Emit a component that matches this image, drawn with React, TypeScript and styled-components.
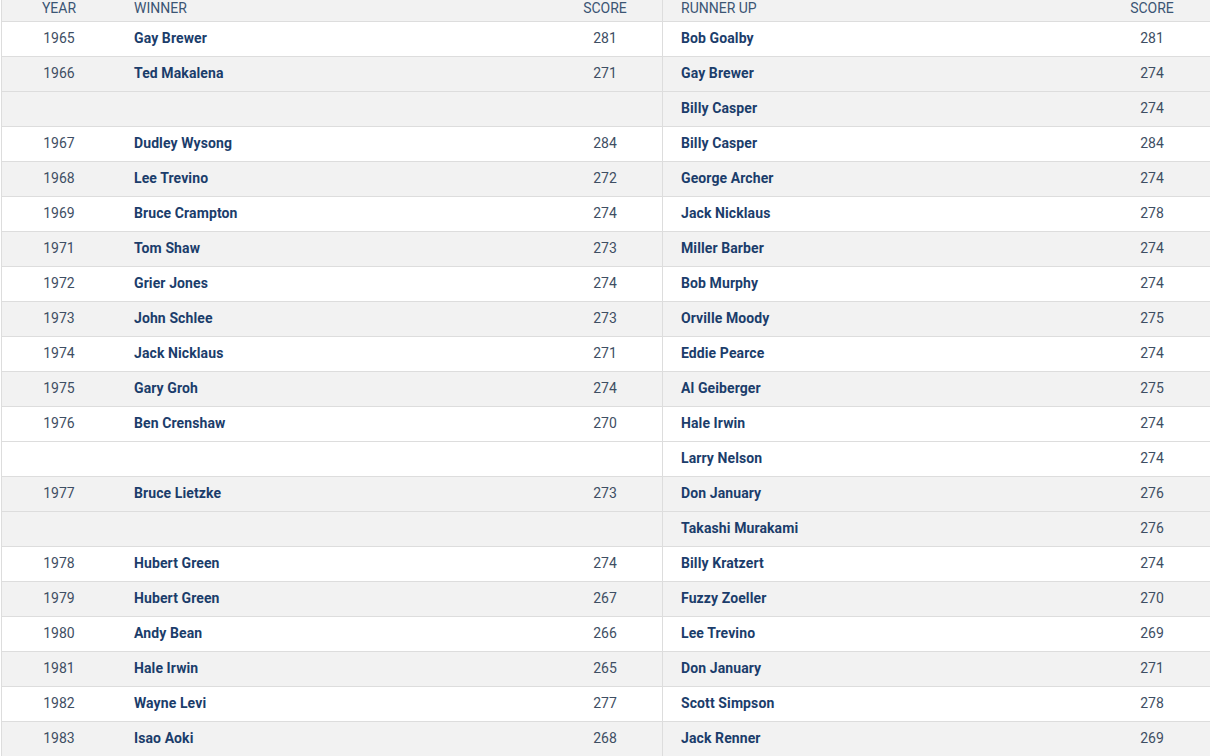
import styled, { createGlobalStyle } from "styled-components";

const GlobalStyle = createGlobalStyle`
  html, body {
    margin: 0;
    padding: 0;
    background: #ffffff;
    font-family: Roboto, "Liberation Sans", Arial, sans-serif;
    overflow: hidden;
  }
`;

type Entry = {
  year?: string;
  winner?: string;
  score?: string;
  runner: string;
  runnerScore: string;
};

// rows grouped by year, so a tie for second keeps the same shade
const groups: Entry[][] = [
  [{ year: "1965", winner: "Gay Brewer", score: "281", runner: "Bob Goalby", runnerScore: "281" }],
  [
    { year: "1966", winner: "Ted Makalena", score: "271", runner: "Gay Brewer", runnerScore: "274" },
    { runner: "Billy Casper", runnerScore: "274" },
  ],
  [{ year: "1967", winner: "Dudley Wysong", score: "284", runner: "Billy Casper", runnerScore: "284" }],
  [{ year: "1968", winner: "Lee Trevino", score: "272", runner: "George Archer", runnerScore: "274" }],
  [{ year: "1969", winner: "Bruce Crampton", score: "274", runner: "Jack Nicklaus", runnerScore: "278" }],
  [{ year: "1971", winner: "Tom Shaw", score: "273", runner: "Miller Barber", runnerScore: "274" }],
  [{ year: "1972", winner: "Grier Jones", score: "274", runner: "Bob Murphy", runnerScore: "274" }],
  [{ year: "1973", winner: "John Schlee", score: "273", runner: "Orville Moody", runnerScore: "275" }],
  [{ year: "1974", winner: "Jack Nicklaus", score: "271", runner: "Eddie Pearce", runnerScore: "274" }],
  [{ year: "1975", winner: "Gary Groh", score: "274", runner: "Al Geiberger", runnerScore: "275" }],
  [
    { year: "1976", winner: "Ben Crenshaw", score: "270", runner: "Hale Irwin", runnerScore: "274" },
    { runner: "Larry Nelson", runnerScore: "274" },
  ],
  [
    { year: "1977", winner: "Bruce Lietzke", score: "273", runner: "Don January", runnerScore: "276" },
    { runner: "Takashi Murakami", runnerScore: "276" },
  ],
  [{ year: "1978", winner: "Hubert Green", score: "274", runner: "Billy Kratzert", runnerScore: "274" }],
  [{ year: "1979", winner: "Hubert Green", score: "267", runner: "Fuzzy Zoeller", runnerScore: "270" }],
  [{ year: "1980", winner: "Andy Bean", score: "266", runner: "Lee Trevino", runnerScore: "269" }],
  [{ year: "1981", winner: "Hale Irwin", score: "265", runner: "Don January", runnerScore: "271" }],
  [{ year: "1982", winner: "Wayne Levi", score: "277", runner: "Scott Simpson", runnerScore: "278" }],
  [{ year: "1983", winner: "Isao Aoki", score: "268", runner: "Jack Renner", runnerScore: "269" }],
];

const Table = styled.div`
  margin-left: 1px;
  border-left: 1px solid #dddddd;
  width: 1209px;
`;

const Row = styled.div<{ $shade?: boolean }>`
  display: grid;
  grid-template-columns: 114px 432px 114px 432px 116px;
  height: 35px;
  box-sizing: border-box;
  border-bottom: 1px solid #dddddd;
  background: ${(p) => (p.$shade ? "#f2f2f2" : "#ffffff")};
`;

const HeadRow = styled(Row)`
  height: 22px;
  background: #f2f2f2;
`;

const HeadCell = styled.div<{ $align?: "left" | "center"; $divider?: boolean }>`
  font-size: 14px;
  line-height: 16px;
  color: #3b5574;
  text-transform: uppercase;
  text-align: ${(p) => p.$align ?? "center"};
  padding-left: ${(p) => (p.$align === "left" ? "18px" : "0")};
  border-left: ${(p) => (p.$divider ? "1px solid #dddddd" : "none")};
`;

const Cell = styled.div<{ $divider?: boolean }>`
  display: flex;
  align-items: center;
  padding-bottom: 2px;
  box-sizing: border-box;
  font-size: 14px;
  border-left: ${(p) => (p.$divider ? "1px solid #dddddd" : "none")};
`;

const NumCell = styled(Cell)`
  justify-content: center;
  color: #3e4e63;
`;

const NameCell = styled(Cell)`
  padding-left: 18px;
  font-weight: 700;
  color: #1b3d6b;
  letter-spacing: 0.1px;
`;

export default function App() {
  return (
    <>
      <GlobalStyle />
      <Table>
        <HeadRow>
          <HeadCell>Year</HeadCell>
          <HeadCell $align="left">Winner</HeadCell>
          <HeadCell>Score</HeadCell>
          <HeadCell $align="left" $divider>
            Runner Up
          </HeadCell>
          <HeadCell>Score</HeadCell>
        </HeadRow>
        {groups.map((group, gi) =>
          group.map((e, i) => (
            <Row key={`${gi}-${i}`} $shade={gi % 2 === 1}>
              <NumCell>{e.year}</NumCell>
              <NameCell>{e.winner}</NameCell>
              <NumCell>{e.score}</NumCell>
              <NameCell $divider>{e.runner}</NameCell>
              <NumCell>{e.runnerScore}</NumCell>
            </Row>
          ))
        )}
      </Table>
    </>
  );
}
